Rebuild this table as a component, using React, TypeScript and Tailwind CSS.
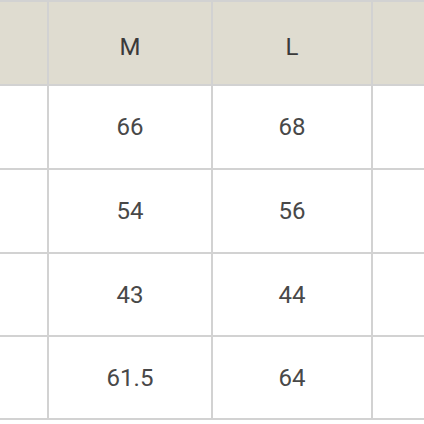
const header = ['', 'M', 'L', ''];
const rows = [
  { h: 'h-[82px]', cells: ['', '66', '68', ''] },
  { h: 'h-[82px]', cells: ['', '54', '56', ''] },
  { h: 'h-[81px]', cells: ['', '43', '44', ''] },
  { h: 'h-[81px]', cells: ['', '61.5', '64', ''] },
];

export default function App() {
  return (
    <div className="w-[424px] h-[424px] overflow-hidden bg-white font-['Roboto',sans-serif]">
      <div className="grid grid-cols-[47px_162px_158px_1fr] gap-[2px] bg-[#d2d2d2] border-y-2 border-[#d2d2d2]">
        {header.map((t, i) => (
          <div
            key={'h' + i}
            className="h-[82px] pt-[8px] bg-[#dfdcd0] flex items-center justify-center text-[24px] text-[#3a3a3a]"
          >
            {t}
          </div>
        ))}
        {rows.map((r, ri) =>
          r.cells.map((t, i) => (
            <div
              key={ri + '-' + i}
              className={`${r.h} bg-white flex items-center justify-center text-[24px] text-[#484848]`}
            >
              {t}
            </div>
          ))
        )}
      </div>
    </div>
  );
}
